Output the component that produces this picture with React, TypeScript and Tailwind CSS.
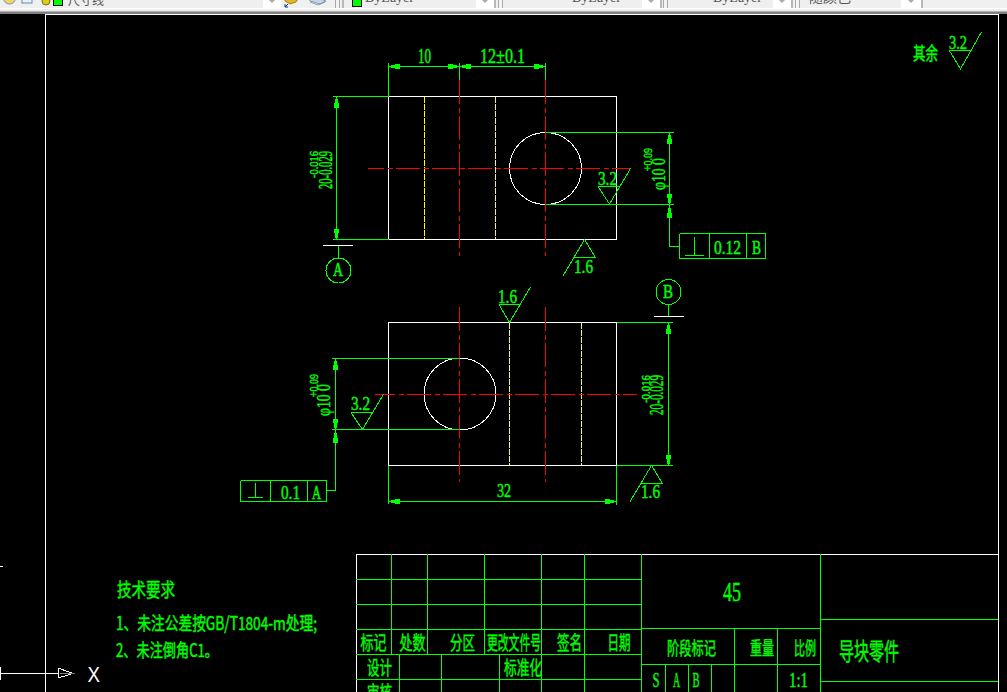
import React from "react";

const G = "#00ff00", W = "#ffffff", R = "#ff0000", Y = "#ffff00";
type L = [number, number, number, number];

const greenLines: L[] = [
  [388.5, 63, 388.5, 96.5], [459.5, 63, 459.5, 80], [545.5, 63, 545.5, 80], [388.5, 66.5, 545.5, 66.5],
  [333, 96.5, 388.5, 96.5], [333, 239.5, 388.5, 239.5], [336.5, 96.5, 336.5, 239.5],
  [338.5, 245.5, 338.5, 258],
  [545.5, 132.5, 674, 132.5], [545.5, 204.5, 674, 204.5], [669.5, 132.5, 669.5, 246.5], [669.5, 246.5, 679.5, 246.5],
  [332, 358.5, 460, 358.5], [332, 429.5, 460, 429.5], [335.5, 358.5, 335.5, 490.5], [326, 490.5, 335.5, 490.5],
  [668.5, 304.5, 668.5, 316], [616.5, 322.5, 672.5, 322.5], [616.5, 465.5, 672.5, 465.5], [668.5, 322.5, 668.5, 465.5],
  [388.5, 465.5, 388.5, 504], [616.5, 465.5, 616.5, 505], [388.5, 501.5, 616.5, 501.5],
  [679.5, 233.5, 765.5, 233.5], [679.5, 258.5, 765.5, 258.5], [679.5, 233.5, 679.5, 258.5], [709.5, 233.5, 709.5, 258.5], [746.5, 233.5, 746.5, 258.5], [765.5, 233.5, 765.5, 258.5],
  [694.5, 237, 694.5, 255.5], [685, 255.5, 704, 255.5],
  [240.5, 480.5, 326.5, 480.5], [240.5, 501.5, 326.5, 501.5], [240.5, 480.5, 240.5, 501.5], [270.5, 480.5, 270.5, 501.5], [307.5, 480.5, 307.5, 501.5], [326.5, 480.5, 326.5, 501.5],
  [255.5, 483, 255.5, 497.5], [248, 497.5, 263, 497.5],
  [356, 579.5, 641.5, 579.5], [356, 604.5, 641.5, 604.5], [356, 629.5, 641.5, 629.5], [356, 654.5, 641.5, 654.5], [356, 679.5, 641.5, 679.5],
  [391.5, 554, 391.5, 654.5], [427.5, 554, 427.5, 654.5], [484.5, 554, 484.5, 654.5], [541.5, 554, 541.5, 692], [584.5, 554, 584.5, 692], [641.5, 554, 641.5, 692],
  [399.5, 654.5, 399.5, 692], [441.5, 654.5, 441.5, 692], [499.5, 654.5, 499.5, 692],
  [641.5, 628.5, 820.5, 628.5], [641.5, 664.5, 820.5, 664.5],
  [734.5, 628.5, 734.5, 692], [777.5, 628.5, 777.5, 692], [665.5, 664.5, 665.5, 692], [688.5, 664.5, 688.5, 692], [711.5, 664.5, 711.5, 692],
  [820.5, 554, 820.5, 692], [820.5, 619.5, 998, 619.5], [820.5, 681.5, 998, 681.5],
];

const rough: string[] = [
  "M949 50H971M949 50L960.5 69L981.5 32",
  "M598 186.5H620M598 186.5L609.5 204L630.5 168.5",
  "M574 257.5H595.5M595.5 257.5L584.5 239.5L563 276",
  "M351 412.5H372.5M351 412.5L362.5 429.5L383.5 394.5",
  "M499 304.5H520M499 304.5L509.5 322.5L530.5 287",
  "M641 483.5H662.5M662.5 483.5L651.5 465.5L630 501.5",
];

function HArrow({ x, y = 66.5, d }: { x: number; y?: number; d: 1 | -1 }) {
  const a = x + d * 2.5, b = x + d * 6.5, c = x + d * 11.5;
  return <path d={`M${a} ${y - 1.5}L${a} ${y + 1.5}L${b} ${y + 1.5}L${b} ${y + 2.5}L${c} ${y + 2.5}L${c} ${y - 2.5}L${b} ${y - 2.5}L${b} ${y - 1.5}Z`} fill={G} shapeRendering="crispEdges" />;
}
function VArrow({ x, y, d, len = 9 }: { x: number; y: number; d: 1 | -1; len?: number }) {
  const a = y + d * 2, b = y + d * (2 + len * 0.45), c = y + d * (2 + len);
  return <path d={`M${x - 1.5} ${a}L${x + 1.5} ${a}L${x + 1.5} ${b}L${x + 2.5} ${b}L${x + 2.5} ${c}L${x - 2.5} ${c}L${x - 2.5} ${b}L${x - 1.5} ${b}Z`} fill={G} shapeRendering="crispEdges" />;
}

const FONT = "font-[family-name:'Liberation_Serif','Noto_Sans_CJK_SC',serif]";
const CJK = "font-[family-name:'Noto_Sans_CJK_SC','Liberation_Serif',serif]";

function T({ x, y, w, s, children, cjk, rot }: { x: number; y: number; w: number; s: number; children: string; cjk?: boolean; rot?: boolean }) {
  return (
    <text
      x={x}
      y={y}
      textLength={w}
      lengthAdjust="spacingAndGlyphs"
      fontSize={s}
      transform={rot ? `rotate(-90 ${x} ${y})` : undefined}
      className={`fill-[#00ff00] stroke-[#00ff00] stroke-[0.45] ${cjk ? CJK : FONT}`}
    >
      {children}
    </text>
  );
}

function Select({ w, white, text, swatch, pad }: { w: number; white: number; text: string; swatch?: boolean; pad?: number }) {
  return (
    <div className="flex h-[24px] shrink-0 border-r-2 border-[#b8b8b8] bg-white" style={{ width: w }}>
      <div className="flex h-full flex-1 items-end gap-[3px] bg-[#efefef] pb-[3px]" style={{ paddingLeft: pad ?? 6 }}>
        {swatch && <span className="block h-[10px] w-[10px] translate-y-[2px] border border-black bg-[#00ff00]" />}
        <span className="text-[14px] leading-none text-[#555] font-[family-name:'Liberation_Serif','Noto_Sans_CJK_SC',serif]">{text}</span>
      </div>
      <div className="flex h-full items-end justify-center pb-[5px]" style={{ width: white }}>
        <span className="block h-0 w-0 border-x-[3px] border-t-[3px] border-x-transparent border-t-[#aaa]" />
      </div>
    </div>
  );
}

function Grip({ w = 8 }: { w?: number }) {
  return (
    <div className="flex h-full shrink-0 justify-center" style={{ width: w }}>
      <div className="h-full w-[5px] border-x border-[#a8a8a8] bg-[#f4f4f4]" />
    </div>
  );
}

export default function App() {
  return (
    <div className="h-[692px] w-[1007px] overflow-hidden bg-black">
      <div className="flex h-[14px] flex-col bg-[#f0f0f0]">
        <div className="flex h-[9px] items-end overflow-hidden border-b border-white">
          <svg width="40" height="9" viewBox="0 0 40 9" className="shrink-0">
            <circle cx="9.5" cy="-1" r="6" fill="#f0d860" stroke="#7a90b8" />
            <rect x="22" y="-4" width="10" height="8" fill="#e8f0f8" stroke="#6a8ab0" />
          </svg>
          <div className="flex h-[24px] w-[241px] shrink-0 items-end bg-white">
            <div className="flex h-full w-[223px] items-end bg-[#efefef] pb-[1px]">
              <svg width="13" height="9" viewBox="0 0 13 9" className="shrink-0">
                <circle cx="6" cy="3" r="4" fill="#d8d020" stroke="#807000" />
              </svg>
              <span className="block h-[10px] w-[10px] shrink-0 translate-y-[-1px] border border-black bg-[#00ff00]" />
              <span className="ml-[5px] text-[12px] leading-[14px] text-[#555] font-[family-name:'Noto_Sans_CJK_SC',sans-serif]">尺寸线</span>
            </div>
            <div className="flex h-full flex-1 items-end justify-center pb-[5px]">
              <span className="block h-0 w-0 border-x-[3px] border-t-[3px] border-x-transparent border-t-[#aaa]" />
            </div>
          </div>
          <svg width="52" height="9" viewBox="0 0 52 9" className="shrink-0">
            <path d="M4 0h13l-2 3l-6 2l-5-3z" fill="#e0b820" stroke="#806010" strokeWidth="0.7" />
            <path d="M4 8l3-3M4 5v3h3" stroke="#103080" fill="none" />
            <path d="M27 -1l10 0l8 3l-6 3l-10-3z" fill="#c8d4e4" stroke="#6080a0" strokeWidth="0.7" />
            <path d="M29 3l8 3l7-3" stroke="#6080a0" fill="none" strokeWidth="0.7" />
          </svg>
          <Grip />
          <div className="h-full w-[1px] shrink-0" />
          <div className="h-full w-[2px] shrink-0 bg-[#b8b8b8]" />
          <Select w={152} white={18} text="ByLayer" swatch pad={8} />
          <Grip />
          <Select w={158} white={18} text="ByLayer" pad={68} />
          <Grip w={7} />
          <Select w={124} white={18} text="ByLayer" pad={44} />
          <Grip />
          <Select w={122} white={20} text="随颜色" pad={8} />
        </div>
        <div className="h-[2px] bg-[#ececec]" />
        <div className="h-[1px] bg-[#b0b0b0]" />
        <div className="h-[2px] bg-[#808080]" />
      </div>
      <svg width="1007" height="678" viewBox="0 14 1007 678" className="block">
        <g stroke={W} fill="none" shapeRendering="crispEdges">
          <path d="M45.5 692V14.5H998.5V692" />
          <rect x="388.5" y="96.5" width="228" height="143" />
          <rect x="388.5" y="322.5" width="228" height="143" />
          <path d="M323 245.5H353M654 316.5H684M356.5 692V554.5H998.5" />
          <path d="M0 673.5H58M0.5 667V680M0 566H3" />
        </g>
        <g fill="none" stroke={W} shapeRendering="crispEdges">
          <circle cx="545.5" cy="168.5" r="36" />
          <circle cx="460" cy="394" r="36" />
        </g>
        <g stroke={Y} strokeDasharray="6 1" shapeRendering="crispEdges">
          <path d="M424.5 97V239M495.5 97V239M509.5 323V465M581.5 323V465" />
        </g>
        <g stroke={R} shapeRendering="crispEdges" strokeDasharray="24 4 5 3">
          <path d="M459.5 80V256M545.5 80V256" />
          <path d="M459.5 307V481.5M545.5 307V481.5" />
          <path d="M368 168.5H630" strokeDashoffset="8" />
          <path d="M375 394.5H637" strokeDashoffset="4" />
        </g>
        <g stroke={G} fill="none" shapeRendering="crispEdges">
          {greenLines.map((l, i) => <line key={i} x1={l[0]} y1={l[1]} x2={l[2]} y2={l[3]} />)}
          <circle cx="338.5" cy="270.5" r="12.5" />
          <circle cx="668.5" cy="292" r="12.5" />
          {rough.map((d, i) => <path key={i} d={d} />)}
          <path d="M58 668L73 673.5L58 678Z" stroke={W} />
          <path d="M60 673.5H75" stroke="#808080" />
        </g>
        <HArrow x={388.5} d={1} />
        <HArrow x={459.5} d={-1} />
        <HArrow x={459.5} d={1} />
        <HArrow x={545.5} d={-1} />
        <HArrow x={388.5} y={501.5} d={1} />
        <HArrow x={616.5} y={501.5} d={-1} />
        <VArrow x={336.5} y={96.5} d={1} />
        <VArrow x={336.5} y={239.5} d={-1} />
        <VArrow x={669.5} y={132.5} d={1} />
        <VArrow x={669.5} y={204.5} d={-1} />
        <VArrow x={669.5} y={206} d={1} len={10} />
        <VArrow x={335.5} y={358.5} d={1} />
        <VArrow x={335.5} y={429.5} d={-1} />
        <VArrow x={335.5} y={431} d={1} len={10} />
        <VArrow x={668.5} y={322.5} d={1} />
        <VArrow x={668.5} y={465.5} d={-1} />

        <T x={418} y={63} w={13} s={20}>10</T>
        <T x={480} y={63} w={45} s={20}>12±0.1</T>
        <T x={332} y={189} w={38} s={19} rot>20-0.029</T>
        <T x={318} y={178} w={27} s={12} rot>-0.016</T>
        <T x={665} y={190} w={32} s={19} rot>φ10 0</T>
        <T x={652} y={171} w={23} s={13} rot>+0.09</T>
        <T x={598} y={185} w={19} s={19}>3.2</T>
        <T x={574} y={273} w={19} s={19}>1.6</T>
        <T x={714} y={254} w={27} s={19}>0.12</T>
        <T x={752} y={254} w={9} s={19}>B</T>
        <T x={333} y={276} w={10} s={18}>A</T>
        <T x={663} y={298} w={10} s={18}>B</T>
        <T x={498} y={303} w={19} s={19}>1.6</T>
        <T x={351} y={410} w={19} s={19}>3.2</T>
        <T x={281} y={499} w={19} s={19}>0.1</T>
        <T x={312} y={499} w={9} s={18}>A</T>
        <T x={497} y={497} w={14} s={19}>32</T>
        <T x={641} y={498} w={19} s={19}>1.6</T>
        <T x={330} y={416} w={32} s={19} rot>φ10 0</T>
        <T x={318} y={397} w={23} s={13} rot>+0.09</T>
        <T x={663} y={415} w={40} s={19} rot>20-0.029</T>
        <T x={650} y={403} w={28} s={12} rot>-0.016</T>
        <T x={913} y={60} w={25} s={18} cjk>其余</T>
        <T x={949} y={49} w={18} s={19}>3.2</T>

        <T x={117} y={597} w={58} s={19} cjk>技术要求</T>
        <T x={116} y={630} w={201} s={18} cjk>1、未注公差按GB/T1804-m处理;</T>
        <T x={116} y={657} w={102} s={18} cjk>2、未注倒角C1。</T>

        <T x={723} y={601} w={18} s={28}>45</T>
        <T x={360.5} y={650} w={26} s={19} cjk>标记</T>
        <T x={399.5} y={650} w={26} s={19} cjk>处数</T>
        <T x={450} y={650} w={25} s={19} cjk>分区</T>
        <T x={487} y={650} w={54} s={19} cjk>更改文件号</T>
        <T x={557} y={650} w={25} s={19} cjk>签名</T>
        <T x={607.5} y={650} w={23} s={19} cjk>日期</T>
        <T x={367} y={675} w={25} s={19} cjk>设计</T>
        <T x={504} y={675} w={38} s={19} cjk>标准化</T>
        <T x={367} y={700} w={25} s={19} cjk>审核</T>
        <T x={667} y={655} w={49} s={18} cjk>阶段标记</T>
        <T x={750} y={655} w={24} s={18} cjk>重量</T>
        <T x={794} y={655} w={22} s={18} cjk>比例</T>
        <T x={652.5} y={687} w={7} s={20}>S</T>
        <T x={673} y={687} w={7} s={20}>A</T>
        <T x={692.5} y={687} w={7} s={20}>B</T>
        <T x={789} y={687} w={19} s={20}>1:1</T>
        <T x={839} y={660} w={60} s={24} cjk>导块零件</T>
        <text x={87.5} y={682} fontSize={22} textLength={12.5} lengthAdjust="spacingAndGlyphs" className="fill-white font-[family-name:'Liberation_Sans',sans-serif]">X</text>
      </svg>
    </div>
  );
}
